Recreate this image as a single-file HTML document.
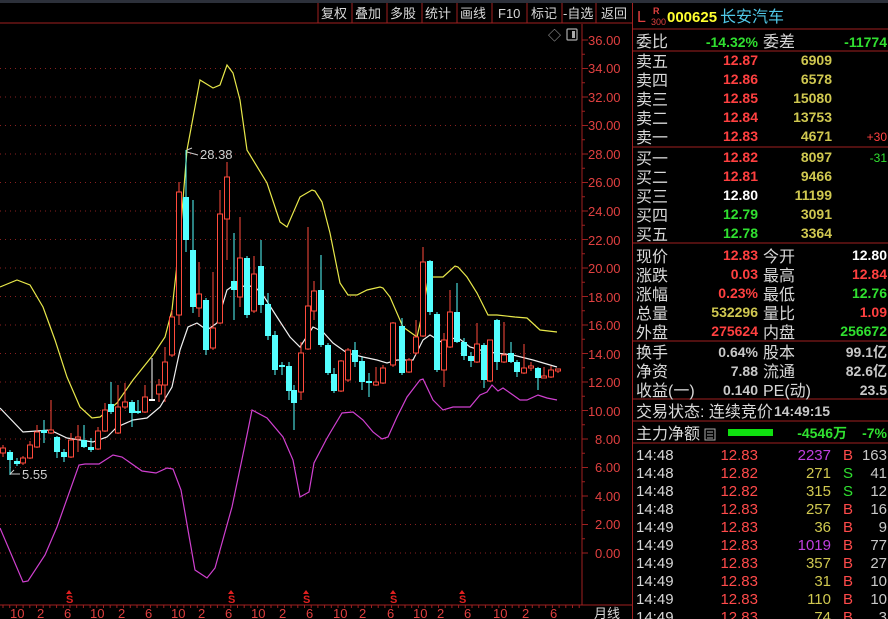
<!DOCTYPE html>
<html><head><meta charset="utf-8">
<style>
html,body{margin:0;padding:0;background:#000;width:888px;height:619px;overflow:hidden}
svg{display:block}
text{font-family:"Liberation Sans","Noto Sans CJK SC",sans-serif}
.lb{fill:#d8d8d8;font-size:16px}
.n{font-size:14px;font-weight:bold}
.tk{font-size:15px;font-family:"Liberation Sans Narrow","Liberation Sans","Noto Sans CJK SC",sans-serif}
</style></head><body>
<svg id="s" width="888" height="619" viewBox="0 0 888 619" xmlns="http://www.w3.org/2000/svg">
<rect x="0" y="0" width="888" height="619" fill="#000"/>
<rect x="0" y="0" width="888" height="3" fill="#2c303a"/>
<g id="grid"></g>
<!-- toolbar -->
<g fill="#d8d8d8" font-size="13">
<line x1="0" y1="23" x2="632" y2="23" stroke="#a02020" stroke-width="1"/>
<g stroke="#a02020"><line x1="318" y1="3" x2="318" y2="23"/><line x1="352" y1="3" x2="352" y2="23"/><line x1="387" y1="3" x2="387" y2="23"/><line x1="422" y1="3" x2="422" y2="23"/><line x1="457" y1="3" x2="457" y2="23"/><line x1="492" y1="3" x2="492" y2="23"/><line x1="527" y1="3" x2="527" y2="23"/><line x1="562" y1="3" x2="562" y2="23"/><line x1="596" y1="3" x2="596" y2="23"/></g>
<text x="321" y="18">复权</text><text x="355" y="18">叠加</text><text x="390" y="18">多股</text><text x="425" y="18">统计</text><text x="460" y="18">画线</text><text x="498" y="18">F10</text><text x="531" y="18">标记</text><text x="563" y="18">-自选</text><text x="601" y="18">返回</text>
</g>
<text x="548" y="40" fill="#aaa" font-size="13">◇</text>
<rect x="567" y="29" width="10" height="11" fill="none" stroke="#aaa" stroke-width="1.2" rx="1"/><rect x="572" y="31" width="3" height="7" fill="#aaa"/>
<!-- axis -->
<line x1="582" y1="24" x2="582" y2="605" stroke="#a02020"/>
<g id="ticks"></g>
<g fill="#e04040" font-size="13">
<text x="588" y="45">36.00</text><text x="588" y="73">34.00</text><text x="588" y="102">32.00</text><text x="588" y="130">30.00</text><text x="588" y="159">28.00</text><text x="588" y="187">26.00</text><text x="588" y="216">24.00</text><text x="588" y="245">22.00</text><text x="588" y="273">20.00</text><text x="588" y="302">18.00</text><text x="588" y="330">16.00</text><text x="588" y="359">14.00</text><text x="588" y="387">12.00</text><text x="588" y="416">10.00</text><text x="595" y="444">8.00</text><text x="595" y="472">6.00</text><text x="595" y="501">4.00</text><text x="595" y="529">2.00</text><text x="595" y="558">0.00</text>
</g>
<!-- lines -->
<polyline fill="none" stroke="#e8e84a" stroke-width="1.2" points="0,287 17,280 30,285 43,307 55,340 67,377 80,407 92,418 100,417 117,403 133,380 153,355 165,337 172,310 180,237 187,150 200,80 213,88 220,85 227,65 233,73 240,100 247,150 267,183 280,222 287,227 300,197 312,190 315,191 322,202 330,233 340,283 348,295 357,295 367,290 380,287 383,288 390,297 403,327 417,337 423,310 428,280 433,277 443,277 455,266 458,267 467,277 477,293 488,315 497,315 515,317 527,318 540,330 557,332"/>
<polyline fill="none" stroke="#f0f0f0" stroke-width="1.2" points="0,408 23,432 50,430 67,438 93,442 107,437 117,427 133,420 147,418 160,407 172,387 180,350 188,327 197,323 207,330 217,323 227,290 237,283 247,288 253,285 263,295 277,317 290,337 300,347 313,327 323,332 333,343 347,353 363,357 377,360 387,363 397,360 413,360 423,340 430,335 443,343 457,337 470,347 487,352 513,355 533,360 557,367"/>
<polyline fill="none" stroke="#d040d0" stroke-width="1.2" points="0,528 23,582 28,581 45,555 57,527 79,465 85,464 99,464 113,455 122,457 142,471 156,473 167,468 173,469 181,490 195,570 207,578 215,568 232,507 246,440 252,410 267,418 283,437 293,460 300,497 309,492 314,463 326,440 330,433 342,413 353,412 363,420 373,432 382,439 388,437 397,417 407,397 420,380 423,379 433,400 443,410 453,407 470,407 480,395 487,392 492,385 498,391 503,388 513,395 520,400 527,400 538,395 547,398 557,400"/>
<g id="candles"></g>
<!-- annotations -->
<g fill="#d0d0d0" font-size="13"><text x="200" y="159">28.38</text><text x="22" y="479">5.55</text></g>
<path d="M187,152 L198,155 M187,150 L192,148" stroke="#ccc" fill="none"/>
<path d="M10,474 L20,474 M10,474 L14,470" stroke="#ccc" fill="none"/>
<!-- S markers -->
<g fill="#e02020" font-size="11" font-weight="bold"><text x="66" y="603">S</text><text x="228" y="603">S</text><text x="303" y="603">S</text><text x="390" y="603">S</text><text x="459" y="603">S</text></g>
<g fill="#e02020"><path d="M69,590 l3,4 h-6z"/><path d="M231,590 l3,4 h-6z"/><path d="M306,590 l3,4 h-6z"/><path d="M393,590 l3,4 h-6z"/><path d="M462,590 l3,4 h-6z"/></g>
<!-- x axis -->
<line x1="0" y1="605" x2="632" y2="605" stroke="#a02020"/>
<g id="xt"></g>
<g fill="#e04040" font-size="13">
<text x="10" y="618">10</text><text x="37" y="618">2</text><text x="64" y="618">6</text><text x="90" y="618">10</text><text x="118" y="618">2</text><text x="145" y="618">6</text><text x="171" y="618">10</text><text x="198" y="618">2</text><text x="225" y="618">6</text><text x="251" y="618">10</text><text x="279" y="618">2</text><text x="306" y="618">6</text><text x="333" y="618">10</text><text x="359" y="618">2</text><text x="387" y="618">6</text><text x="413" y="618">10</text><text x="437" y="618">2</text><text x="464" y="618">6</text><text x="493" y="618">10</text><text x="522" y="618">2</text><text x="550" y="618">6</text>
</g>
<text x="594" y="618" fill="#d8d8d8" font-size="13">月线</text>
<!-- right panel -->
<line x1="632.5" y1="3" x2="632.5" y2="619" stroke="#a02020"/>
<g stroke="#a02020"><line x1="633" y1="29" x2="888" y2="29"/><line x1="633" y1="51" x2="888" y2="51"/><line x1="633" y1="147" x2="888" y2="147"/><line x1="633" y1="243" x2="888" y2="243"/><line x1="633" y1="341" x2="888" y2="341"/><line x1="633" y1="399" x2="888" y2="399"/><line x1="633" y1="421" x2="888" y2="421"/><line x1="633" y1="443" x2="888" y2="443"/></g>
<text x="637" y="22" fill="#e04040" font-size="16">L</text>
<text x="653" y="14" fill="#e04040" font-size="9" font-weight="bold">R</text>
<text x="651" y="25" fill="#e04040" font-size="9">300</text>
<text x="667" y="22" fill="#ffff30" font-size="15" font-weight="bold">000625</text>
<text x="720" y="22" fill="#50c8e8" font-size="16">长安汽车</text>
<text x="636" y="47" class="lb">委比</text><text x="758" y="47" text-anchor="end" class="n" fill="#30e030">-14.32%</text><text x="763" y="47" class="lb">委差</text><text x="887" y="47" text-anchor="end" class="n" fill="#30e030">-11774</text>
<g class="lb"><text x="636" y="67">卖五</text><text x="636" y="86">卖四</text><text x="636" y="105">卖三</text><text x="636" y="124">卖二</text><text x="636" y="143">卖一</text>
<text x="636" y="164">买一</text><text x="636" y="183">买二</text><text x="636" y="202">买三</text><text x="636" y="221">买四</text><text x="636" y="240">买五</text></g>
<g class="n" text-anchor="end">
<text x="758" y="65" fill="#ff4040">12.87</text><text x="758" y="84" fill="#ff4040">12.86</text><text x="758" y="103" fill="#ff4040">12.85</text><text x="758" y="122" fill="#ff4040">12.84</text><text x="758" y="141" fill="#ff4040">12.83</text>
<text x="758" y="162" fill="#ff4040">12.82</text><text x="758" y="181" fill="#ff4040">12.81</text><text x="758" y="200" fill="#fff">12.80</text><text x="758" y="219" fill="#30e030">12.79</text><text x="758" y="238" fill="#30e030">12.78</text>
<g fill="#d0c850"><text x="832" y="65">6909</text><text x="832" y="84">6578</text><text x="832" y="103">15080</text><text x="832" y="122">13753</text><text x="832" y="141">4671</text><text x="832" y="162">8097</text><text x="832" y="181">9466</text><text x="832" y="200">11199</text><text x="832" y="219">3091</text><text x="832" y="238">3364</text></g>
<text x="887" y="141" fill="#ff4040" font-weight="normal" font-size="12">+30</text><text x="887" y="162" fill="#30e030" font-weight="normal" font-size="12">-31</text>
</g>
<g class="lb"><text x="636" y="262">现价</text><text x="636" y="281">涨跌</text><text x="636" y="300">涨幅</text><text x="636" y="319">总量</text><text x="636" y="338">外盘</text>
<text x="763" y="262">今开</text><text x="763" y="281">最高</text><text x="763" y="300">最低</text><text x="763" y="319">量比</text><text x="763" y="338">内盘</text>
<text x="636" y="358">换手</text><text x="636" y="377">净资</text><text x="636" y="396">收益(一)</text><text x="763" y="358">股本</text><text x="763" y="377">流通</text><text x="763" y="396">PE(动)</text>
<text x="636" y="417">交易状态: 连续竞价</text><text x="636" y="439">主力净额</text></g>
<g class="n" text-anchor="end">
<text x="758" y="260" fill="#ff4040">12.83</text><text x="758" y="279" fill="#ff4040">0.03</text><text x="758" y="298" fill="#ff4040">0.23%</text><text x="758" y="317" fill="#d0c850">532296</text><text x="758" y="336" fill="#ff4040">275624</text>
<text x="887" y="260" fill="#fff">12.80</text><text x="887" y="279" fill="#ff4040">12.84</text><text x="887" y="298" fill="#30e030">12.76</text><text x="887" y="317" fill="#ff4040">1.09</text><text x="887" y="336" fill="#30e030">256672</text>
<g fill="#c8c8c8"><text x="758" y="357">0.64%</text><text x="758" y="376">7.88</text><text x="758" y="395">0.140</text><text x="887" y="357">99.1亿</text><text x="887" y="376">82.6亿</text><text x="887" y="395">23.5</text><text x="830" y="416">14:49:15</text></g>
<text x="847" y="438" fill="#30e030">-4546万</text><text x="887" y="438" fill="#30e030">-7%</text>
</g>
<rect x="705" y="429" width="10" height="11" fill="none" stroke="#aaa"/><path d="M707,432h6M707,435h6M707,438h6" stroke="#aaa"/>
<rect x="728" y="429" width="45" height="7" fill="#10e010"/>
<g class="tk" id="tks"></g>
</svg>
<script>
var ns="http://www.w3.org/2000/svg";
function el(p,t,a,tx){var e=document.createElementNS(ns,t);for(var k in a)e.setAttribute(k,a[k]);if(tx)e.textContent=tx;document.getElementById(p).appendChild(e);return e;}
// grid
for(var i=1;i<19;i++){var y=40+i*28.5;el("grid","line",{x1:0,x2:580,y1:y,y2:y,stroke:"#8a2020","stroke-dasharray":"1 4"});}
for(var i=0;i<=36;i++){var y=40+i*14.25;el("ticks","line",{x1:582,x2:i%2?585:588,y1:y,y2:y,stroke:"#a02020"});}
for(var x=3;x<580;x+=6.7){el("xt","line",{x1:x,x2:x,y1:605,y2:608,stroke:"#a02020"});}
var C=[[3,448,453,445,457,'r'],[10,452,460,450,475,'c'],[17,461,464,458,466,'c'],[23,458,463,456,465,'r'],[30,445,458,441,459,'r'],[37,432,447,425,448,'r'],[44,430,433,420,443,'c'],[51,430,433,400,434,'r'],[57,437,452,436,458,'c'],[64,452,457,449,462,'c'],[71,440,457,433,458,'r'],[78,437,439,425,452,'r'],[84,440,447,425,448,'c'],[91,447,450,438,452,'c'],[98,431,449,427,450,'r'],[105,410,431,403,432,'r'],[111,404,412,382,414,'c'],[118,407,433,385,434,'r'],[125,402,407,383,409,'r'],[132,402,413,400,427,'c'],[138,411,413,400,414,'c'],[145,397,412,385,413,'r'],[152,399,401,358,400,'w'],[159,385,394,379,402,'r'],[165,362,385,347,402,'r'],[172,317,355,310,357,'r'],[179,192,315,182,325,'r'],[186,197,240,150,252,'c'],[193,250,307,200,313,'c'],[199,294,308,262,317,'r'],[206,300,350,298,355,'c'],[213,328,348,272,350,'r'],[220,214,323,190,324,'r'],[227,177,219,162,260,'r'],[234,281,290,233,320,'c'],[240,258,297,217,307,'r'],[247,258,315,256,318,'c'],[254,274,311,256,313,'r'],[261,266,305,240,313,'c'],[268,304,336,293,340,'c'],[275,335,370,331,375,'c'],[282,365,367,362,375,'c'],[289,366,391,362,400,'c'],[294,390,403,385,430,'c'],[301,353,392,342,400,'r'],[308,306,349,227,350,'r'],[314,291,311,281,320,'r'],[321,290,345,255,347,'c'],[328,345,373,343,375,'c'],[334,374,391,368,393,'c'],[341,361,391,360,392,'r'],[348,350,380,348,382,'r'],[355,350,362,342,367,'c'],[362,361,382,357,390,'c'],[369,381,383,373,397,'c'],[376,382,385,367,386,'r'],[383,368,383,365,384,'r'],[393,323,365,322,367,'r'],[402,326,373,318,375,'c'],[409,360,372,358,373,'r'],[416,337,353,320,355,'r'],[423,262,336,247,337,'r'],[430,261,312,260,315,'c'],[437,314,370,312,372,'c'],[444,340,370,333,387,'r'],[450,312,347,290,348,'r'],[457,312,342,283,343,'c'],[464,342,356,338,360,'c'],[471,356,361,352,367,'c'],[477,344,362,323,363,'r'],[484,345,380,343,388,'c'],[490,340,381,340,382,'r'],[497,320,362,319,370,'c'],[504,355,362,322,363,'r'],[511,353,362,342,363,'c'],[517,362,372,360,377,'c'],[524,368,373,344,374,'r'],[531,366,368,362,371,'r'],[538,368,378,367,390,'c'],[544,376,378,367,378,'r'],[551,370,377,366,378,'r'],[558,369,371,369,373,'r']];
C.forEach(function(c){var x=c[0],col=c[5]=='r'?"#ff4a3c":c[5]=='c'?"#54ffff":"#ffffff";
el("candles","line",{x1:x,x2:x,y1:c[3],y2:c[4],stroke:col});
var h=Math.max(1,c[2]-c[1]);
if(c[5]=='r')el("candles","rect",{x:x-2.5,y:c[1],width:5,height:h,fill:"#000",stroke:col});
else el("candles","rect",{x:x-3,y:c[1],width:6,height:h,fill:col});});
var T=[["14:48","12.83","2237","#c040e0","B","163"],["14:48","12.82","271","#d0c850","S","41"],["14:48","12.82","315","#d0c850","S","12"],["14:48","12.83","257","#d0c850","B","16"],["14:49","12.83","36","#d0c850","B","9"],["14:49","12.83","1019","#c040e0","B","77"],["14:49","12.83","357","#d0c850","B","27"],["14:49","12.83","31","#d0c850","B","10"],["14:49","12.83","110","#d0c850","B","10"],["14:49","12.83","74","#d0c850","B","3"]];
T.forEach(function(r,i){var y=460+i*18;
el("tks","text",{x:636,y:y,fill:"#d8d8d8"},r[0]);
el("tks","text",{x:758,y:y,fill:"#ff4a4a","text-anchor":"end"},r[1]);
el("tks","text",{x:831,y:y,fill:r[3],"text-anchor":"end"},r[2]);
el("tks","text",{x:843,y:y,fill:r[4]=="B"?"#ff4a4a":"#30e030"},r[4]);
el("tks","text",{x:887,y:y,fill:"#c8c8c8","text-anchor":"end"},r[5]);});
</script>
</body></html>
